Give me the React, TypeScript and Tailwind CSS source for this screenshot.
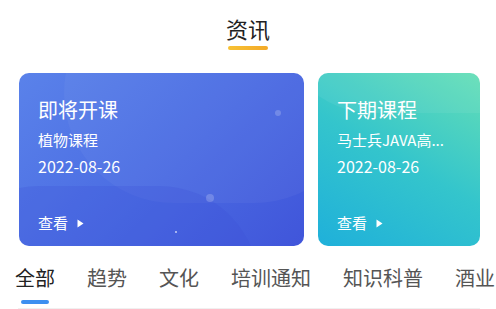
import React from "react";

const font = { fontFamily: '"Noto Sans CJK SC", "Noto Sans", sans-serif' };

function Arrow() {
  return (
    <svg width="7" height="9" viewBox="0 0 7 9" className="ml-[9px]">
      <path d="M0.5 0.5 L6.5 4.5 L0.5 8.5 Z" fill="white" />
    </svg>
  );
}

function Card({
  title,
  sub,
  date,
  className,
  children,
}: {
  title: string;
  sub: string;
  date: string;
  className: string;
  children?: React.ReactNode;
}) {
  return (
    <div className={`relative shrink-0 h-[173px] rounded-[10px] overflow-hidden text-white pl-[19px] pt-[23px] flex flex-col ${className}`}>
      {children}
      <div className="relative text-[20px] leading-[28px]">{title}</div>
      <div className="relative text-[15px] leading-[22px] mt-[5px] whitespace-nowrap">{sub}</div>
      <div className="relative text-[16px] leading-[22px] mt-[4px]">{date}</div>
      <div className="relative mt-auto mb-[12px] flex items-center text-[15px] leading-[22px]">
        查看
        <Arrow />
      </div>
    </div>
  );
}

export default function App() {
  const tabs = ["全部", "趋势", "文化", "培训通知", "知识科普", "酒业"];
  return (
    <div className="w-[496px] h-[309px] bg-white overflow-hidden" style={font}>
      <div className="flex flex-col items-center pt-[13px]">
        <div className="text-[22px] leading-[30px] text-[#222]">资讯</div>
        <div className="w-[40px] h-[4px] rounded-full mt-[3px] bg-gradient-to-r from-[#f7c234] to-[#f3a928]" />
      </div>
      <div className="flex gap-[14px] pl-[19px] mt-[23px]">
        <Card
          title="即将开课"
          sub="植物课程"
          date="2022-08-26"
          className="w-[285px] bg-[linear-gradient(135deg,#5a82ea_0%,#4a6be2_55%,#4055da_100%)]"
        >
          <div className="absolute -right-[60px] -top-[90px] w-[300px] h-[220px] rounded-full bg-white/[0.04]" />
          <div className="absolute -left-[80px] bottom-[-140px] w-[320px] h-[200px] rounded-full bg-[#3a50d6]/[0.25]" />
          <div className="absolute left-[256px] top-[37px] w-[6px] h-[6px] rounded-full bg-white/20" />
          <div className="absolute left-[187px] top-[121px] w-[8px] h-[8px] rounded-full bg-white/20" />
          <div className="absolute left-[156px] top-[158px] w-[2px] h-[2px] rounded-full bg-white/70" />
        </Card>
        <Card
          title="下期课程"
          sub="马士兵JAVA高..."
          date="2022-08-26"
          className="w-[162px] bg-[linear-gradient(30deg,#1fb0da_0%,#34c5cc_50%,#64deb6_100%)]"
        >
          <div className="absolute -left-[40px] -top-[150px] w-[300px] h-[190px] rounded-full bg-white/[0.06]" />
        </Card>
      </div>
      <div className="mt-[18px] pl-[15px] flex gap-[32px] whitespace-nowrap">
        {tabs.map((t, i) => (
          <div key={t} className="flex flex-col items-center">
            <div className={`text-[20px] leading-[28px] ${i === 0 ? "text-[#222]" : "text-[#555]"}`}>{t}</div>
            {i === 0 ? (
              <div className="w-[28px] h-[4px] rounded-full bg-[#3d8ff0] mt-[8px]" />
            ) : null}
          </div>
        ))}
      </div>
      <div className="ml-[18px] w-[462px] h-px bg-[#f0f0f0] mt-[4px]" />
    </div>
  );
}
